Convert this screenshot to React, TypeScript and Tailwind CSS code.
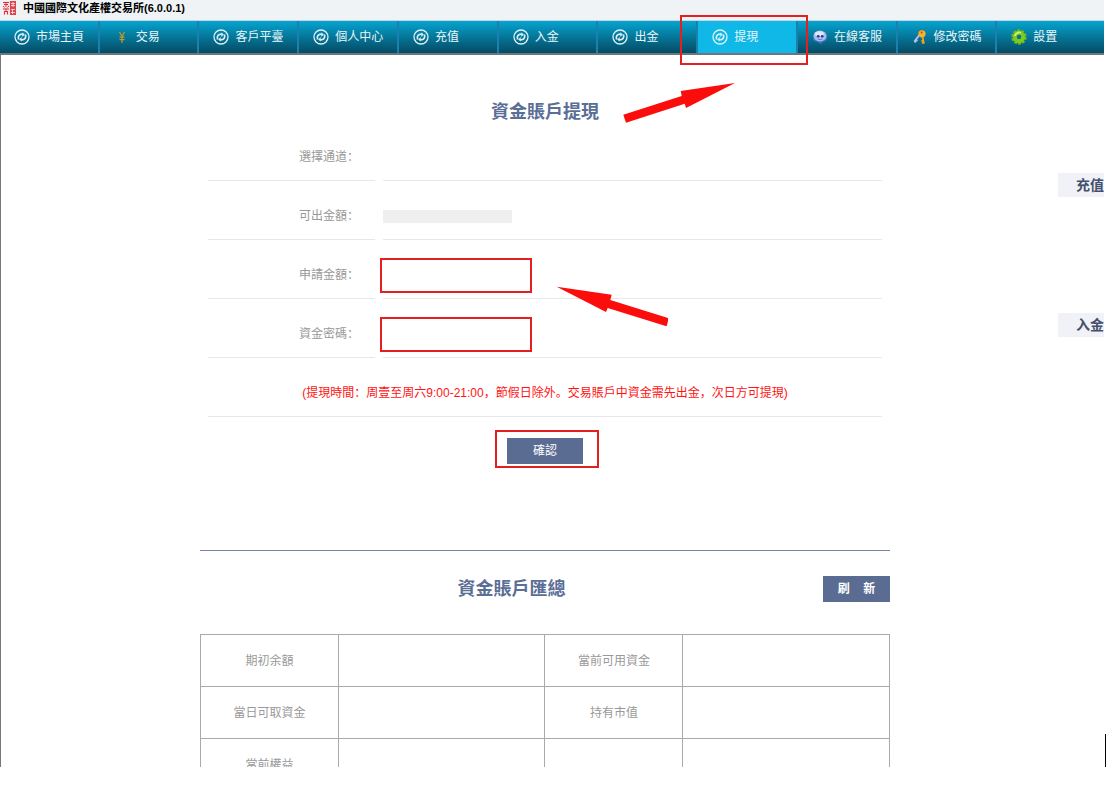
import type { ReactNode } from "react";

const SwirlIcon = () => (
  <svg viewBox="0 0 16 16" className="size-4 shrink-0" fill="none" stroke="#dcf1f7">
    <circle cx="8" cy="8" r="7" strokeWidth="1.3" />
    <path d="M4.6 10.4C3.6 7.4 5.2 5 8.8 5.2" strokeWidth="1.7" />
    <path d="M11.4 5.6C12.4 8.6 10.8 11 7.2 10.8" strokeWidth="1.7" />
    <path d="M8.4 3.4l2.4 2.1-2.6 2.4z" fill="#dcf1f7" stroke="none" />
    <path d="M7.6 12.6l-2.4-2.1 2.6-2.4z" fill="#dcf1f7" stroke="none" />
  </svg>
);

const YenIcon = () => (
  <svg viewBox="0 0 16 16" className="size-4 shrink-0" fill="none" stroke="#c2992c" strokeWidth="1.2">
    <path d="M5.5 3l2.5 4.5L10.5 3M8 7.5V14M5.5 8.2h5M5.5 10.6h5" />
  </svg>
);

const FaceIcon = () => (
  <svg viewBox="0 0 16 16" className="size-4 shrink-0">
    <path d="M1.5 9L.6 10.8l2 1.4 2.6.8 3.6 2 2-1.8 3.2-1.4 1.4-2.2L14 8.4z" fill="#3f6fc4" />
    <ellipse cx="8" cy="7" rx="6.6" ry="5.4" fill="#a9bdec" />
    <ellipse cx="7.4" cy="4.8" rx="4.5" ry="2.6" fill="#dbe5fb" />
    <circle cx="6.2" cy="7.2" r="1.3" fill="#26357c" />
    <circle cx="10.2" cy="7.2" r="1.3" fill="#26357c" />
    <path d="M5.8 10q2.4 1.4 4.6 0" stroke="#5f7cc8" fill="none" />
  </svg>
);

const KeysIcon = () => (
  <svg viewBox="0 0 16 16" className="size-4 shrink-0" fill="none">
    <path d="M7.8 5.5L2.3 12.6M3.8 10.8l1.6 1.3M2.6 12.2l1.3 1.2" stroke="#b9bdf0" strokeWidth="1.9" />
    <path d="M6.6 2.9l3.2-1.4" stroke="#c9503c" strokeWidth="1.4" />
    <circle cx="10" cy="4.8" r="3.6" fill="#f5b32c" />
    <circle cx="9.6" cy="3.6" r="1" fill="#a8541a" />
    <path d="M10.3 7l1.7 7.6M11.4 11.6l-2 .5M11.9 13.7l-2 .5" stroke="#f7a21b" strokeWidth="1.8" />
  </svg>
);

const GearIcon = () => (
  <svg viewBox="0 0 16 16" className="size-4 shrink-0" fill="none">
    <circle cx="8" cy="8" r="6.6" stroke="#6dbb1b" strokeWidth="2.2" strokeDasharray="2.9 1.25" />
    <circle cx="8" cy="8" r="4.2" stroke="#7ccb1f" strokeWidth="4" />
    <path d="M3.8 7a4.6 4.6 0 0 1 6.2-3.2" stroke="#d3f06a" strokeWidth="1.8" />
    <ellipse cx="8.4" cy="7.8" rx="1.5" ry="2.1" transform="rotate(35 8.4 7.8)" fill="#14708c" />
  </svg>
);

const SealLogo = () => (
  <svg viewBox="0 0 13 14" className="h-[14px] w-[13px] shrink-0" fill="none" stroke="#d8333c">
    <path d="M0 0h13v14H0z" fill="#fbe3e4" stroke="none" />
    <path d="M7 0h6v14H7z" fill="#dd4650" stroke="none" />
    <path d="M0 1.5h6M1 3.5h4M3 1v5M1.5 6.5L0 5M4.5 6.5L6 5M0 8h6M3 7.5v3M1 10.5h4M1.5 10v3.5M4.5 10v3.5" />
    <path d="M8 2.5h4M8 4.5h4M10 1v5M8 8.5h4M8 11.5h4M9.5 8v5" stroke="#fbe5e6" strokeWidth=".8" />
  </svg>
);

type NavItem = { label: string; icon: ReactNode; active?: boolean };

const navItems: NavItem[] = [
  { label: "市場主頁", icon: <SwirlIcon /> },
  { label: "交易", icon: <YenIcon /> },
  { label: "客戶平臺", icon: <SwirlIcon /> },
  { label: "個人中心", icon: <SwirlIcon /> },
  { label: "充值", icon: <SwirlIcon /> },
  { label: "入金", icon: <SwirlIcon /> },
  { label: "出金", icon: <SwirlIcon /> },
  { label: "提現", icon: <SwirlIcon />, active: true },
  { label: "在線客服", icon: <FaceIcon /> },
  { label: "修改密碼", icon: <KeysIcon /> },
  { label: "設置", icon: <GearIcon /> },
];

const summaryRows = [
  ["期初余額", "當前可用資金"],
  ["當日可取資金", "持有市值"],
  ["當前權益", ""],
];

const FormRow = ({ label, htmlFor, children }: { label: string; htmlFor?: string; children?: ReactNode }) => (
  <div className="flex h-[59px] gap-2">
    <div className="flex w-[167px] items-center justify-end border-b border-[#e8e8e8] pt-3 pr-4 text-[#999]">
      {htmlFor ? <label htmlFor={htmlFor}>{label}</label> : <span>{label}</span>}
    </div>
    <div className="flex flex-1 items-center border-b border-[#e8e8e8] pt-3">{children}</div>
  </div>
);

const inputClass = "-ml-[3px] h-[35px] w-[152px] border-2 border-[#e3201f] bg-white px-2 outline-none";

export default function App() {
  return (
    <div className="flex h-screen overflow-hidden bg-white pb-7 font-['Liberation_Sans','Noto_Sans_CJK_SC',sans-serif] text-xs">
      <div className="flex min-w-0 flex-1 flex-col">
        <header>
          <div className="flex h-5 items-start gap-[7px] bg-[#eff3f5] pt-px pl-[3px] text-[11px] leading-[14px] font-bold text-black">
            <SealLogo />
            中國國際文化產權交易所(6.0.0.1)
          </div>
          <nav className="flex h-[35px] border-t border-b-2 border-t-[#c5d5da] border-b-[#6f7679] bg-linear-to-b from-[#05a5d1] to-[#044b64] pr-[7px]">
            {navItems.map((item) => (
              <div key={item.label} className="group relative flex-1">
                <a
                  href="#"
                  className={
                    "flex h-full items-center gap-1.5 border-r-2 border-[#1a80ae] pl-3.5 whitespace-nowrap text-[#e8f6fa] group-last:border-r-0 " +
                    (item.active ? "bg-[#0fb8e6]" : "")
                  }
                >
                  {item.icon}
                  {item.label}
                </a>
                {item.active && (
                  <span className="pointer-events-none absolute -top-1.5 -right-2.5 -bottom-3 -left-[18px] z-10 border-2 border-[#e3201f]" />
                )}
              </div>
            ))}
          </nav>
        </header>

        <main className="flex min-h-0 flex-1 gap-[168px] overflow-hidden border-l border-[#777] pl-[199px]">
          <div className="relative min-w-0 flex-1">
            <form className="px-2" onSubmit={(e) => e.preventDefault()}>
              <h1 className="pt-12 text-center text-lg leading-[19px] font-bold text-[#5a6e96]">資金賬戶提現</h1>
              <FormRow label="選擇通道：" />
              <FormRow label="可出金額：">
                <span className="h-[13px] w-[129px] bg-[#efefef]" />
              </FormRow>
              <FormRow label="申請金額：" htmlFor="amount">
                <input id="amount" type="text" className={inputClass} />
              </FormRow>
              <FormRow label="資金密碼：" htmlFor="password">
                <input id="password" type="password" className={inputClass} />
              </FormRow>
              <p className="flex h-[59px] items-center justify-center border-b border-[#e8e8e8] pt-3 text-[#ff1414]">
                (提現時間：周壹至周六9:00-21:00，節假日除外。交易賬戶中資金需先出金，次日方可提現)
              </p>
              <div className="mt-[21px] flex justify-center">
                <div className="relative">
                  <button type="submit" className="block h-[26px] w-[76px] bg-[#5a6c92] text-white">
                    確認
                  </button>
                  <span className="pointer-events-none absolute -top-2 -right-4 -bottom-1 -left-3 border-2 border-[#e3201f]" />
                </div>
              </div>
            </form>

            <svg viewBox="0 0 112 40" className="absolute top-7 left-[423px] h-10 w-28" fill="#fb0d0b">
              <path d="M112 0L57.7 8l1 5L.3 31.7l2.7 8 58.7-19 1.3 4.3z" />
            </svg>
            <svg viewBox="0 0 112 40" className="absolute top-[231px] left-[356px] h-10 w-28" fill="#fb0d0b">
              <path d="M.7.7l55 8-1.4 5.3 58.4 18.3-2 8L51.7 22 50 26z" />
            </svg>

            <section className="mt-[86px] border-t border-[#7485a5] pt-[25px]">
              <div className="flex items-center">
                <h2 className="flex-1 text-center text-lg leading-5 font-bold text-[#5a6e96]">資金賬戶匯總</h2>
                <button type="button" className="h-[26px] w-[67px] bg-[#5a6c92] font-bold whitespace-pre text-white">
                  {"刷    新"}
                </button>
              </div>
              <table className="mt-8 w-full table-fixed border-collapse text-center text-[#999]">
                <tbody>
                  {summaryRows.map(([left, right]) => (
                    <tr key={left} className="h-[52px]">
                      <th scope="row" className="w-1/5 border border-[#aaa] font-normal">{left}</th>
                      <td className="w-3/10 border border-[#aaa]" />
                      <th scope="row" className="w-1/5 border border-[#aaa] font-normal">{right}</th>
                      <td className="w-3/10 border border-[#aaa]" />
                    </tr>
                  ))}
                </tbody>
              </table>
            </section>
          </div>

          <aside className="flex w-[46px] flex-col gap-[116px] pt-[118px] text-sm leading-6 font-bold text-[#44506b]">
            <a href="#" className="h-6 overflow-hidden bg-[#f1f2f7] pl-[18px] whitespace-nowrap">充值</a>
            <a href="#" className="h-6 overflow-hidden bg-[#f1f2f7] pl-[18px] whitespace-nowrap">入金</a>
          </aside>
        </main>
      </div>
      <div className="flex w-[3px] items-end justify-center">
        <span className="h-[33px] w-px bg-black" />
      </div>
    </div>
  );
}
